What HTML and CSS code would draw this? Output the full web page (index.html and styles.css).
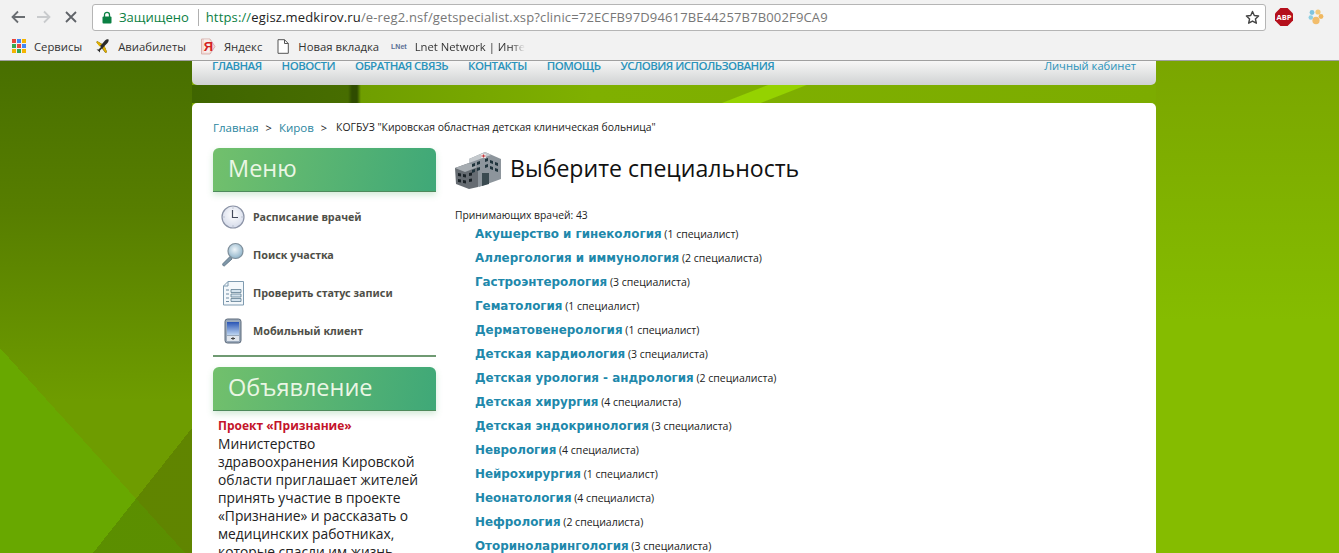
FILE: index.html
```html
<!DOCTYPE html>
<html lang="ru">
<head>
    <meta charset="UTF-8">
    <title>Выберите специальность</title>
    <link rel="stylesheet" href="styles.css">
</head>
<body>
    <header class="chrome">
        <div class="toolbar">
            <svg class="tool-icon" width="16" height="16" viewBox="0 0 16 16"><path d="M15 8H2.500M8 2.500L2.500 8 8 13.500" fill="none" stroke="#6a6e72" stroke-width="1.800"/></svg>
            <svg class="tool-icon" width="16" height="16" viewBox="0 0 16 16"><path d="M1 8h12.500M8 2.500L13.500 8 8 13.500" fill="none" stroke="#c9cbcd" stroke-width="1.800"/></svg>
            <svg class="tool-icon" width="16" height="16" viewBox="0 0 16 16"><path d="M3 3l10 10M13 3L3 13" fill="none" stroke="#5f6368" stroke-width="1.800"/></svg>
            <div class="omnibox">
                <svg class="lock" width="10" height="13" viewBox="0 0 10 13"><path d="M2.500 6V3.800a2.500 2.500 0 0 1 5 0V6" fill="none" stroke="#0b8043" stroke-width="1.300"/><rect x="0.500" y="5.500" width="9" height="7" rx="1" fill="#0b8043"/></svg>
                <span class="secure">Защищено</span>
                <span class="url"><span class="url-scheme">https://</span><span class="url-host">egisz.medkirov.ru</span>/e-reg2.nsf/getspecialist.xsp?clinic=72ECFB97D94617BE44257B7B002F9CA9</span>
                <svg class="star" width="15" height="15" viewBox="0 0 16 16"><path d="M8 1.600l1.900 4.300 4.600.5-3.400 3.100 1 4.600L8 11.800l-4.100 2.300 1-4.600L1.500 6.400l4.600-.5z" fill="none" stroke="#444" stroke-width="1.500" stroke-linejoin="round"/></svg>
            </div>
            <div class="abp">ABP</div>
            <svg class="paw" width="16" height="16" viewBox="0 0 16 16">
                <circle cx="4" cy="3.500" r="2.400" fill="#7fc4e0"/>
                <circle cx="10" cy="3" r="2.600" fill="#f2c879"/>
                <circle cx="2.800" cy="8.500" r="2.300" fill="#8fcfe2"/>
                <circle cx="13" cy="7.500" r="2.400" fill="#f0b860"/>
                <ellipse cx="8" cy="11.500" rx="3.600" ry="3.800" fill="#f2bd6b"/>
            </svg>
        </div>
        <nav class="bookmarks">
            <a class="bookmark">
                <svg width="14" height="14" viewBox="0 0 14 14">
                    <rect x="0" y="0" width="4" height="4" fill="#e8453c"/><rect x="5" y="0" width="4" height="4" fill="#4285f4"/><rect x="10" y="0" width="4" height="4" fill="#f4b400"/>
                    <rect x="0" y="5" width="4" height="4" fill="#34a853"/><rect x="5" y="5" width="4" height="4" fill="#e8453c"/><rect x="10" y="5" width="4" height="4" fill="#4285f4"/>
                    <rect x="0" y="10" width="4" height="4" fill="#f4b400"/><rect x="5" y="10" width="4" height="4" fill="#34a853"/><rect x="10" y="10" width="4" height="4" fill="#f4b400"/>
                </svg>
                Сервисы
            </a>
            <a class="bookmark">
                <svg width="14" height="14" viewBox="0 0 14 14"><path d="M1 2l5 3 3-3.500c1-1 3-1.500 3.500-1s0 2.500-1 3.500L8.500 7l2.500 6-1.500 1-3.500-4.500L4 11.500 4 13.500 2.500 12 0.500 10.500h2L5 8 0.500 3.500z" fill="#2b2b2b"/><path d="M1 2l5 3-2.500 2.500L0.500 3.500z" fill="#e0b000"/><path d="M8.500 7L11 13 9.500 14 6.500 9.500z" fill="#e0b000"/></svg>
                Авиабилеты
            </a>
            <a class="bookmark">
                <svg width="16" height="17" viewBox="0 0 16 17"><path d="M1.500 1h8.500l5 7.500-5 7.500H1.500z" fill="#f6d9d6" stroke="#d8b5b0"/><path d="M4 1.500h5.500v13H4z" fill="#f4f1ef"/><text class="ya" x="3.700" y="13">Я</text></svg>
                Яндекс
            </a>
            <a class="bookmark">
                <svg width="14" height="15" viewBox="0 0 14 15"><path d="M2 .7h6.500L12.300 4.500v9.800H2z" fill="#fff" stroke="#555"/><path d="M8.500 .7v3.800h3.800" fill="none" stroke="#555"/></svg>
                Новая вкладка
            </a>
            <a class="bookmark bookmark-last">
                <span class="lnet-logo">LNet</span>
                <span class="fade">Lnet Network | Интер</span>
            </a>
        </nav>
    </header>

    <div class="page">
        <div class="wrap">
            <nav class="topnav">
                <a>ГЛАВНАЯ</a>
                <a>НОВОСТИ</a>
                <a>ОБРАТНАЯ СВЯЗЬ</a>
                <a>КОНТАКТЫ</a>
                <a>ПОМОЩЬ</a>
                <a>УСЛОВИЯ ИСПОЛЬЗОВАНИЯ</a>
                <a class="cabinet">Личный кабинет</a>
            </nav>

            <main class="card">
                <div class="crumbs">
                    <a>Главная</a><span class="sep">&gt;</span><a>Киров</a><span class="sep">&gt;</span><span class="crumb-now">КОГБУЗ "Кировская областная детская клиническая больница"</span>
                </div>

                <div class="columns">
                    <aside class="side">
                        <h2 class="side-title">Меню</h2>
                        <ul class="menu">
                            <li>
                                <svg width="26" height="26" viewBox="0 0 26 26"><defs><radialGradient id="face" cx="50%" cy="40%" r="60%"><stop offset="0" stop-color="#fff"/><stop offset="1" stop-color="#d5dbea"/></radialGradient></defs><circle cx="13" cy="13" r="11" fill="url(#face)" stroke="#8b93a6" stroke-width="1.200"/><path d="M12.500 6v7.500H18" fill="none" stroke="#444b5c" stroke-width="1.200"/><path d="M13 3.500v1M13 21.500v1M3.500 13h1M21.500 13h1" stroke="#9aa2b5"/></svg>
                                <span class="menu-label">Расписание врачей</span>
                            </li>
                            <li>
                                <svg width="26" height="26" viewBox="0 0 26 26"><defs><radialGradient id="lens" cx="45%" cy="40%" r="60%"><stop offset="0" stop-color="#eef5f9"/><stop offset="1" stop-color="#8fb3c9"/></radialGradient></defs><path d="M10.500 14L3 21.500c-.8 1-.2 2.500 1.300 2.500L12 17z" fill="#7f97a8" stroke="#536a7c" stroke-width=".8"/><circle cx="15.500" cy="9" r="7.500" fill="url(#lens)" stroke="#7f8f9b" stroke-width="1.200"/></svg>
                                <span class="menu-label">Поиск участка</span>
                            </li>
                            <li>
                                <svg width="26" height="26" viewBox="0 0 26 26"><path d="M8 1.500h15.500v23.500H3.500V6z" fill="#f4f8fb" stroke="#7f9bb0"/><path d="M8 1.500V6H3.500" fill="none" stroke="#7f9bb0"/><path d="M6 10h3M6 14h3M6 18h3M6 21.500h3" stroke="#6f8ba1"/><path d="M11 9.500h10v3H11zM11 14h10v3H11zM11 18.500h10v3H11z" fill="#d4e3ee" stroke="#5f7d93" stroke-width=".8"/></svg>
                                <span class="menu-label">Проверить статус записи</span>
                            </li>
                            <li>
                                <svg width="26" height="26" viewBox="0 0 26 26"><defs><linearGradient id="screen" x1="0" y1="0" x2="0" y2="1"><stop offset="0" stop-color="#2a55b5"/><stop offset="1" stop-color="#bcd4f0"/></linearGradient></defs><rect x="5" y="1" width="16" height="24" rx="2.500" fill="#9aa9bb" stroke="#5d6a7a"/><rect x="7" y="4" width="12" height="13" fill="url(#screen)"/><rect x="7" y="18" width="12" height="5" fill="#dfe5ec"/><path d="M11 20.500h4M13 19v3" stroke="#444"/></svg>
                                <span class="menu-label">Мобильный клиент</span>
                            </li>
                        </ul>
                        <h2 class="side-title">Объявление</h2>
                        <div class="notice">
                            <b>Проект «Признание»</b><br>
                            Министерство здравоохранения Кировской области приглашает жителей принять участие в проекте «Признание» и рассказать о медицинских работниках, которые спасли им жизнь
                        </div>
                    </aside>

                    <section class="content">
                        <div class="title-row">
                            <svg width="48" height="38" viewBox="0 0 48 38">
                                <path d="M14 8L30 1l16 7v20L24 36 14 31z" fill="#8d959c"/>
                                <path d="M14 8L30 1l6 3-22 8z" fill="#c4c9cd"/>
                                <path d="M0 17l14-5 9 4v20l-9 2L1 33z" fill="#666c72"/>
                                <path d="M0 17l14-5 9 4-13 5z" fill="#a6acb1"/>
                                <path d="M17 13l3-1v3l-3 1zM22 11l3-1v3l-3 1zM30 8l3-1v3l-3 1zM35 9l3 1v3l-3-1zM40 11l3 1v3l-3-1zM17 19l3-1v3l-3 1zM22 17l3-1v3l-3 1zM30 14l3-1v3l-3 1zM35 15l3 1v3l-3-1zM40 17l3 1v3l-3-1z" fill="#20343c"/>
                                <path d="M3 22l3 .5v3L3 25zM8 23l3 .5v3L8 26zM3 28l3 .5v3L3 31zM8 29l3 .5v3L8 32zM14 22l3-.5v3l-3 .5zM14 28l3-.5v3l-3 .5z" fill="#1a2227"/>
                                <path d="M27 22h7v11l-7 2z" fill="#3a4a50"/>
                                <path d="M26 3h5v4h-5z" fill="#e9e4e4"/><path d="M28 3.500h1v3h-1zM26.500 4.500h4v1h-4z" fill="#c7353b"/>
                            </svg>
                            <h1 class="page-title">Выберите специальность</h1>
                        </div>
                        <p class="total">Принимающих врачей: 43</p>
                        <ul class="spec-list">
                            <li><a>Акушерство и гинекология</a> (1 специалист)</li>
                            <li><a>Аллергология и иммунология</a> (2 специалиста)</li>
                            <li><a>Гастроэнтерология</a> (3 специалиста)</li>
                            <li><a>Гематология</a> (1 специалист)</li>
                            <li><a>Дерматовенерология</a> (1 специалист)</li>
                            <li><a>Детская кардиология</a> (3 специалиста)</li>
                            <li><a>Детская урология - андрология</a> (2 специалиста)</li>
                            <li><a>Детская хирургия</a> (4 специалиста)</li>
                            <li><a>Детская эндокринология</a> (3 специалиста)</li>
                            <li><a>Неврология</a> (4 специалиста)</li>
                            <li><a>Нейрохирургия</a> (1 специалист)</li>
                            <li><a>Неонатология</a> (4 специалиста)</li>
                            <li><a>Нефрология</a> (2 специалиста)</li>
                            <li><a>Оториноларингология</a> (3 специалиста)</li>
                        </ul>
                    </section>
                </div>
            </main>
        </div>
    </div>
</body>
</html>
```
FILE: styles.css
```css
html, body {
    margin: 0;
    padding: 0;
    height: 553px;
    overflow: hidden;
}

body {
    display: flex;
    flex-direction: column;
    font-family: "Open Sans", "Noto Sans", sans-serif;
    color: #222;
}

/* browser window */
.chrome {
    height: 60px;
    background-color: #f2f2f2;
    border-bottom: 1px solid #a0a0a0;
    flex-shrink: 0;
}

.toolbar {
    height: 34px;
    display: flex;
    align-items: center;
    padding-left: 10px;
    box-sizing: border-box;
}

.tool-icon {
    margin-right: 10px;
}

.tool-icon:nth-child(2) {
    margin-right: 11px;
}

.omnibox {
    width: 1174px;
    height: 27px;
    margin-left: 3px;
    box-sizing: border-box;
    background-color: #fff;
    border: 1px solid #b5b5b5;
    border-radius: 3px;
    display: flex;
    align-items: center;
    padding-left: 9px;
    font-size: 13px;
}

.secure {
    margin-left: 7px;
    padding-right: 9px;
    border-right: 1px solid #b0b0b0;
    color: #0b8043;
    line-height: 17px;
}

.url {
    margin-left: 7px;
    color: #777;
    letter-spacing: 0.15px;
}

.url-scheme {
    color: #0b8043;
}

.url-host {
    color: #222;
}

.star {
    margin-left: auto;
    margin-right: 5px;
}

.abp {
    width: 18px;
    height: 18px;
    margin-left: 9px;
    clip-path: polygon(30% 0, 70% 0, 100% 30%, 100% 70%, 70% 100%, 30% 100%, 0 70%, 0 30%);
    background-color: #b5101c;
    color: #fff;
    font-size: 7.500px;
    font-weight: 700;
    line-height: 18px;
    text-align: center;
}

.paw {
    margin-left: 15px;
}

.bookmarks {
    height: 26px;
    box-sizing: border-box;
    padding: 0 0 2px 12px;
    display: flex;
    align-items: center;
    font-size: 11.300px;
    color: #333;
}

.bookmark {
    display: flex;
    align-items: center;
    gap: 8px;
    margin-right: 14px;
    white-space: nowrap;
}

.bookmark-last {
    margin: 0 0 0 -2px;
}

.ya {
    font-family: "Liberation Sans", sans-serif;
    font-size: 13px;
    font-weight: 700;
    fill: #d42020;
}

.lnet-logo {
    font-family: "Liberation Sans", sans-serif;
    font-size: 7px;
    font-weight: 700;
    color: #5a6f95;
}

.fade {
    width: 110px;
    overflow: hidden;
    -webkit-mask-image: linear-gradient(to right, #000 88%, transparent);
    mask-image: linear-gradient(to right, #000 88%, transparent);
}

/* page behind the cards */
.page {
    flex: 1;
    overflow: hidden;
    background-color: #4a7000;
    background-repeat: no-repeat;
    background-image:
        linear-gradient(to bottom right, transparent 50%, rgba(40, 40, 0, 0.2) 50%),
        linear-gradient(to bottom left, transparent 50%, #68a800 50%),
        linear-gradient(to bottom right, transparent 35%, #95d200 36%, #95d200 49%, transparent 50%),
        linear-gradient(to right, #3f6500, #476d00 156px, #2f4c00 160px, #2f4c00 165px, #6f9e00 169px, #7fb000 400px, #7cac00),
        linear-gradient(to bottom, #486f00, #577e00 150px, #6e9c00 340px),
        linear-gradient(to bottom, #7aa600, #85bc00 260px);
    background-size:
        99px 125px,
        185px 205px,
        138px 54px,
        964px 18px,
        192px 100%,
        100% 100%;
    background-position:
        93px 367px,
        0 287px,
        716px 6px,
        192px 24px,
        0 0,
        0 0;
}

.wrap {
    width: 964px;
    margin-left: 192px;
}

.topnav {
    height: 24px;
    box-sizing: border-box;
    display: flex;
    gap: 20px;
    padding: 0 20px;
    background: linear-gradient(to bottom, #f7f7f7, #d0d2d3);
    border-radius: 0 0 5px 5px;
    font-size: 11.500px;
    font-weight: 600;
    line-height: 9px;
    letter-spacing: -0.55px;
    color: #2a93bb;
    white-space: nowrap;
}

.cabinet {
    margin-left: auto;
    font-weight: 400;
    letter-spacing: 0;
    font-size: 11.200px;
}

.card {
    margin-top: 18px;
    height: 600px;
    padding: 16px 21px 0;
    background-color: #fff;
    border-radius: 5px;
}

.crumbs {
    height: 16px;
    display: flex;
    align-items: center;
    font-size: 11.500px;
}

.crumbs a {
    color: #2a86a0;
}

.sep {
    margin: 0 7px;
    font-size: 11px;
}

.crumb-now {
    margin-left: 2px;
    font-size: 10.400px;
}

.columns {
    display: grid;
    grid-template-columns: 223px 1fr;
    column-gap: 19px;
    margin-top: 13px;
}

/* left column */
.side-title {
    height: 44px;
    box-sizing: border-box;
    margin: 0;
    padding-left: 15px;
    background: linear-gradient(100deg, #72c06c, #3fa878);
    border-bottom: 1px solid #4e8a5c;
    border-radius: 6px 6px 0 0;
    box-shadow: 0 3px 6px rgba(80, 170, 100, 0.25);
    color: #eaf6e4;
    font-size: 23.500px;
    font-weight: 400;
    line-height: 40px;
}

.menu {
    list-style: none;
    margin: 6px 0 10px;
    padding: 0 0 5px;
    border-bottom: 2px solid #6f9a72;
}

.menu li {
    height: 38px;
    display: flex;
    align-items: center;
    gap: 7px;
    padding-left: 7px;
    font-family: "Noto Sans", sans-serif;
    font-size: 10.800px;
    font-weight: 700;
    color: #4f4f48;
}

.menu-label {
    margin-bottom: 2px;
}

.notice {
    margin-top: 5px;
    padding: 0 5px;
    font-size: 13.800px;
    line-height: 18px;
    color: #222;
}

.notice b {
    color: #c4142a;
    font-size: 12px;
}

/* right column */
.title-row {
    height: 44px;
    display: flex;
    align-items: center;
    gap: 7px;
}

.page-title {
    margin: -4px 0 0;
    font-size: 23.100px;
    font-weight: 400;
    color: #111;
}

.total {
    margin: 16px 0 0;
    font-size: 10.300px;
    line-height: 14px;
}

.spec-list {
    list-style: none;
    margin: 0;
    padding: 0 0 0 20px;
    font-size: 10.500px;
}

.spec-list li {
    height: 24px;
    line-height: 24px;
    white-space: nowrap;
}

.spec-list a {
    font-family: "DejaVu Sans", sans-serif;
    font-size: 11.900px;
    font-weight: 700;
    color: #2088ab;
}
```
